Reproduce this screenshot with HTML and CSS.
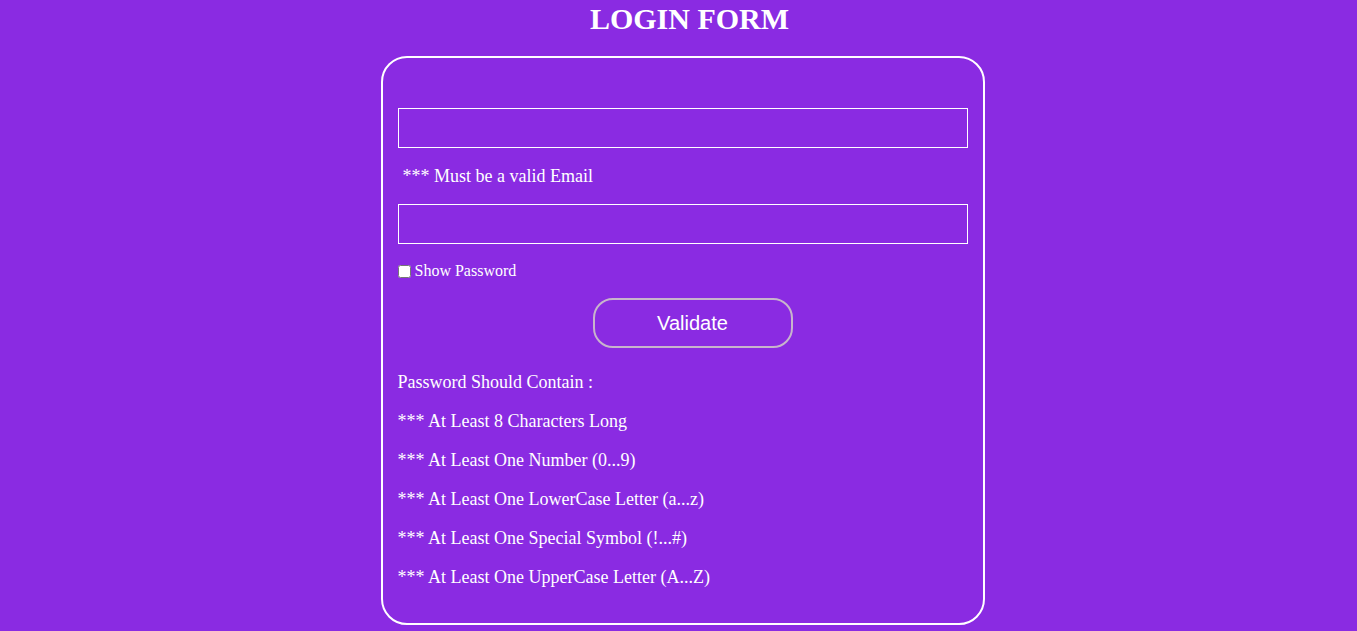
FILE: index.html
```html
<!DOCTYPE html>
<html>
<head>
<meta charset="utf-8">
<link rel="stylesheet" href="styles.css">
</head>
<body>
<div class="page">
  <h1 class="title">LOGIN FORM</h1>
  <form class="card">
    <input class="field" type="text">
    <div class="hint">*** Must be a valid Email</div>
    <input class="field" type="password">
    <label class="show"><input type="checkbox" class="check"> Show Password</label>
    <div class="btn-row"><button type="button" class="btn">Validate</button></div>
    <p class="rule">Password Should Contain :</p>
    <p class="rule">*** At Least 8 Characters Long</p>
    <p class="rule">*** At Least One Number (0...9)</p>
    <p class="rule">*** At Least One LowerCase Letter (a...z)</p>
    <p class="rule">*** At Least One Special Symbol (!...#)</p>
    <p class="rule">*** At Least One UpperCase Letter (A...Z)</p>
  </form>
</div>
</body>
</html>
```
FILE: styles.css
```css
html, body {
  margin: 0;
  padding: 0;
  background: #8a2be2;
  color: #fff;
  font-family: "Liberation Serif", "Times New Roman", serif;
}
.page {
  display: flex;
  flex-direction: column;
  align-items: center;
}
.title {
  font-size: 30px;
  font-weight: bold;
  margin: 2px 0 0 22px;
  line-height: 34px;
}
.card {
  box-sizing: border-box;
  width: 604px;
  margin: 20px 0 7px 8px;
  border: 2px solid #fff;
  border-radius: 26px;
  padding: 50px 15px 17px 15px;
  display: flex;
  flex-direction: column;
}
.field {
  box-sizing: border-box;
  width: 570px;
  height: 40px;
  margin: 0;
  border: 1px solid #fff;
  background: transparent;
  color: #fff;
  outline: none;
}
.hint {
  font-size: 18px;
  line-height: 21px;
  margin: 18px 0 17px 5px;
}
.show {
  display: flex;
  align-items: center;
  font-size: 16px;
  line-height: 18px;
  margin-top: 18px;
}
.check {
  width: 13px;
  height: 13px;
  margin: 0 4px 0 0;
}
.btn-row {
  display: flex;
  justify-content: center;
  margin-top: 18px;
}
.btn {
  box-sizing: border-box;
  margin-left: 20px;
  width: 200px;
  height: 50px;
  border: 2px solid #c8b4cc;
  border-radius: 20px;
  background: transparent;
  color: #fff;
  font-family: "Liberation Sans", Arial, sans-serif;
  font-size: 20px;
}
.rule {
  font-size: 18px;
  line-height: 21px;
  margin: 18px 0 0 0;
}
.rule:first-of-type {
  margin-top: 24px;
}
.rule:last-of-type {
  margin-bottom: 18px;
}
```
